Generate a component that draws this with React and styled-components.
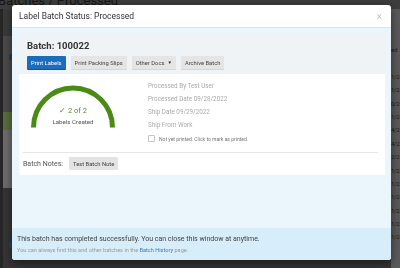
import React from "react";
import styled, { createGlobalStyle } from "styled-components";

const GlobalStyle = createGlobalStyle`
  html, body {
    margin: 0;
    padding: 0;
    width: 400px;
    height: 268px;
    overflow: hidden;
    background: #474747;
    font-family: Roboto, "Liberation Sans", sans-serif;
  }
`;

const leftBands = [
  { h: 27, color: "#3a3a3a" },
  { h: 76, color: "#4b4b4b", tag: true },
  { h: 17, color: "#5a6d3d" },
  { h: 58, color: "#6c6c6c" },
  { h: 80, color: "#353535", tagBottom: true },
];

const dates = ["ed", "", "1/2", "1/2", "0/2", "1/2", "4/2", "4/2", "2/2", "1/2", "1/2", "1/2", "1/2", "1/2", "1/2"];

const App = () => {
  return (
    <>
      <GlobalStyle />
      <Backdrop>
        <TopBar>
          <PageTitle>Batches / Processed</PageTitle>
        </TopBar>
        <Content>
          <Rail />
          <MainCol>
            {leftBands.map((b, i) => (
              <Band key={i} $h={b.h} $color={b.color} $bottom={b.tagBottom}>
                {(b.tag || b.tagBottom) && <BlueTag />}
              </Band>
            ))}
          </MainCol>
          <DateCol>
            {dates.map((d, i) => (
              <DateLine key={i}>{d}</DateLine>
            ))}
          </DateCol>
        </Content>
      </Backdrop>

      <Modal>
        <Header>
          <HeaderTitle>Label Batch Status: Processed</HeaderTitle>
          <Close>×</Close>
        </Header>
        <Body>
          <PanelHead>
            <BatchTitle>Batch: 100022</BatchTitle>
            <ButtonRow>
              <Btn $primary>Print Labels</Btn>
              <Btn>Print Packing Slips</Btn>
              <Btn>
                Other Docs <Caret>▼</Caret>
              </Btn>
              <Btn>Archive Batch</Btn>
            </ButtonRow>
          </PanelHead>
          <Card>
            <TopRow>
              <Gauge>
                <svg width="100" height="48" viewBox="0 0 100 48">
                  <path
                    d="M 10.5 47.5 A 39.5 39.5 0 0 1 89.5 47.5"
                    fill="none"
                    stroke="#4a8a16"
                    strokeWidth="5"
                  />
                </svg>
                <GaugeLabel>
                  <Count>✓ 2 of 2</Count>
                  <Created>Labels Created</Created>
                </GaugeLabel>
              </Gauge>
              <Info>
                <InfoLine>Processed By Test User</InfoLine>
                <InfoLine>Processed Date 09/28/2022</InfoLine>
                <InfoLine>Ship Date 09/29/2022</InfoLine>
                <InfoLine>Ship From Work</InfoLine>
                <CheckRow>
                  <Box />
                  <CheckText>Not yet printed. Click to mark as printed.</CheckText>
                </CheckRow>
              </Info>
            </TopRow>
            <Divider />
            <NotesRow>
              <NotesLabel>Batch Notes:</NotesLabel>
              <NoteBtn>Test Batch Note</NoteBtn>
            </NotesRow>
          </Card>
        </Body>
        <Footer>
          <FootMain>
            This batch has completed successfully. You can close this window at anytime.
          </FootMain>
          <FootSub>
            You can always find this and other batches in the <Link>Batch History</Link> page.
          </FootSub>
        </Footer>
      </Modal>
    </>
  );
};

export default App;

const Backdrop = styled.div`
  display: flex;
  flex-direction: column;
  height: 268px;
`;
const TopBar = styled.div`
  height: 10px;
  background: #3d3d3d;
  overflow: hidden;
`;
const PageTitle = styled.div`
  margin: -7px 0 0 -2px;
  font-size: 13px;
  line-height: 16px;
  color: #161616;
`;
const Content = styled.div`
  flex: 1;
  display: grid;
  grid-template-columns: 3px 1fr 9px;
`;
const Rail = styled.div`
  background: #262626;
`;
const MainCol = styled.div`
  display: flex;
  flex-direction: column;
`;
const Band = styled.div`
  height: ${(p) => p.$h}px;
  background: ${(p) => p.$color};
  display: flex;
  align-items: ${(p) => (p.$bottom ? "flex-end" : "flex-start")};
  padding: ${(p) => (p.$bottom ? "0 0 20px 6px" : "18px 0 0 6px")};
  box-sizing: border-box;
`;
const BlueTag = styled.div`
  width: 4px;
  height: 6px;
  background: #21406a;
`;
const DateCol = styled.div`
  background: #5a5a5a;
  padding-top: 34px;
  overflow: hidden;
`;
const DateLine = styled.div`
  height: 13.4px;
  font-size: 6px;
  line-height: 13px;
  letter-spacing: -0.3px;
  color: #1d1d1d;
  white-space: nowrap;
`;

const Modal = styled.div`
  position: fixed;
  top: 5px;
  left: 12px;
  width: 379px;
  height: 255px;
  display: flex;
  flex-direction: column;
  background: #fff;
  border-radius: 3px;
  overflow: hidden;
  box-shadow: 0 3px 10px rgba(0, 0, 0, 0.5);
`;
const Header = styled.div`
  height: 23px;
  flex: none;
  display: flex;
  align-items: center;
  justify-content: space-between;
  padding: 0 9px 0 7px;
  border-bottom: 1px solid #dbe5ee;
  box-sizing: border-box;
`;
const HeaderTitle = styled.div`
  font-size: 8.5px;
  color: #333;
`;
const Close = styled.div`
  font-size: 10px;
  color: #c4c4c4;
`;
const Body = styled.div`
  flex: 1;
  background: #eaf5fc;
  padding: 5px 6px 0 7px;
`;
const PanelHead = styled.div`
  background: #eff3f6;
  padding: 5px 8px 5px;
`;
const BatchTitle = styled.div`
  font-size: 9.5px;
  font-weight: 700;
  line-height: 16px;
  color: #333;
`;
const ButtonRow = styled.div`
  display: flex;
  gap: 5px;
  margin-top: 2px;
`;
const Btn = styled.div`
  height: 13px;
  display: flex;
  align-items: center;
  gap: 3px;
  padding: 0 4px;
  font-size: 5.8px;
  border-radius: 1px;
  color: ${(p) => (p.$primary ? "#fff" : "#444")};
  background: ${(p) => (p.$primary ? "#1b6cbd" : "#e5e5e5")};
  box-shadow: 0 1px 0 ${(p) => (p.$primary ? "#135394" : "#d6d6d6")};
`;
const Caret = styled.span`
  font-size: 4.5px;
  color: #222;
`;
const Card = styled.div`
  background: #fff;
  padding: 6px 7px 5px 4px;
`;
const TopRow = styled.div`
  display: grid;
  grid-template-columns: 125px 1fr;
`;
const Gauge = styled.div`
  position: relative;
  height: 65px;
`;
const GaugeLabel = styled.div`
  position: absolute;
  top: 25px;
  left: 0;
  width: 100px;
  text-align: center;
`;
const Count = styled.div`
  font-size: 7.5px;
  line-height: 11px;
  color: #5b8a26;
`;
const Created = styled.div`
  font-size: 6.2px;
  line-height: 13px;
  color: #555;
`;
const Info = styled.div`
  display: flex;
  flex-direction: column;
`;
const InfoLine = styled.div`
  font-size: 6.3px;
  line-height: 13px;
  color: #a9a9a9;
`;
const CheckRow = styled.div`
  display: flex;
  align-items: center;
  gap: 4px;
  height: 13px;
`;
const Box = styled.div`
  width: 5px;
  height: 5px;
  border: 1px solid #c6c6c6;
  border-radius: 1px;
`;
const CheckText = styled.div`
  font-size: 5px;
  color: #777;
`;
const Divider = styled.div`
  height: 1px;
  background: #e6e6e6;
  margin-top: 7px;
`;
const NotesRow = styled.div`
  display: flex;
  align-items: center;
  gap: 6px;
  margin-top: 4px;
`;
const NotesLabel = styled.div`
  font-size: 7px;
  color: #555;
`;
const NoteBtn = styled.div`
  height: 13px;
  display: flex;
  align-items: center;
  padding: 0 4px;
  font-size: 5.8px;
  color: #444;
  background: #e3e3e3;
  border-radius: 1px;
`;
const Footer = styled.div`
  height: 32px;
  flex: none;
  background: #d8edfa;
  padding: 5px 5px;
  box-sizing: border-box;
`;
const FootMain = styled.div`
  font-size: 7px;
  line-height: 12px;
  color: #444;
`;
const FootSub = styled.div`
  font-size: 5.6px;
  line-height: 11px;
  color: #9a9a9a;
`;
const Link = styled.span`
  color: #3a7bbf;
`;
